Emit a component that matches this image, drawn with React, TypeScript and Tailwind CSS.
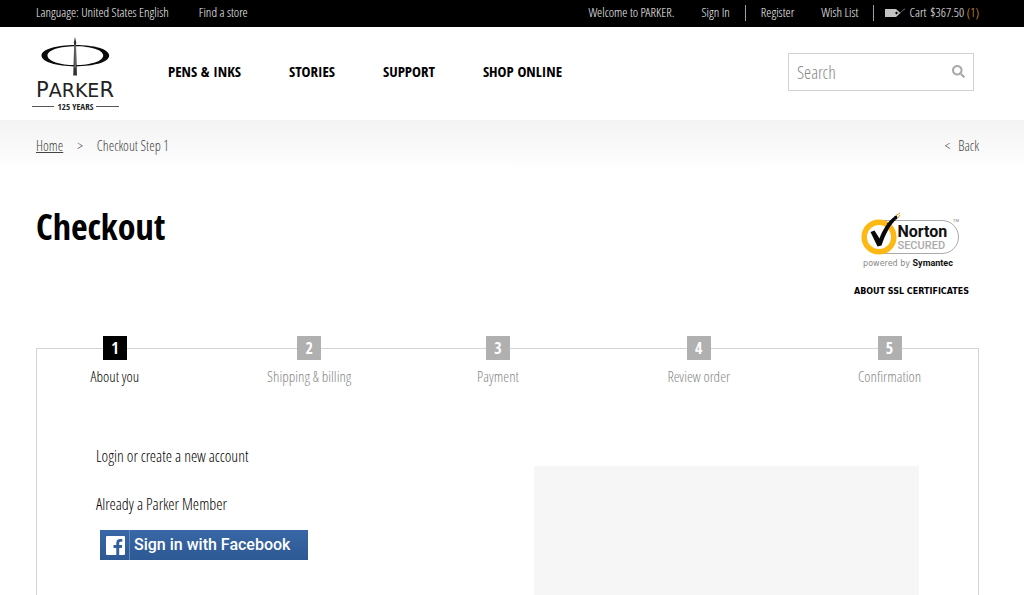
import type { FormEvent } from "react";
import { FaSearch } from "react-icons/fa";

const mainNav = ["PENS & INKS", "STORIES", "SUPPORT", "SHOP ONLINE"];

const steps = [
  "About you",
  "Shipping & billing",
  "Payment",
  "Review order",
  "Confirmation",
];

// Headings, navigation and step numbers share the heavier condensed face
const boldFace = "font-['Open_Sans_Condensed',sans-serif] font-bold";

const ParkerLogo = () => (
  <svg
    viewBox="0 0 88 76"
    className="mt-1 h-[76px] w-[88px] shrink-0"
    role="img"
    aria-label="Parker"
  >
    <path
      fillRule="evenodd"
      fill="#0a0a0a"
      d="M43.300 9C62 9 77.200 13 77.200 19.600S62 30.400 43.300 30.400 9.500 26 9.500 19.600 24.600 9 43.300 9ZM43.300 10.200C28 10.200 15.500 14 15.500 19.600S28 29.200 43.300 29.200 71.200 25.500 71.200 19.600 58.600 10.200 43.300 10.200Z"
    />
    <path fill="#333" d="M43 1L44.300 6.500 44 9 45 39.500H41.200L42.200 9 41.800 6.500Z" />
    <path stroke="#bbb" strokeWidth=".6" d="M43.100 9V32" />
    <text
      x="43"
      y="61"
      textAnchor="middle"
      fill="#222"
      fontFamily="'DejaVu Sans', sans-serif"
      fontSize="19"
    >
      <tspan fontSize="21">P</tspan>ARKE<tspan fontSize="21">R</tspan>
    </text>
    <path stroke="#555" d="M0 70.500H22M64 70.500H87" />
    <text
      x="43.500"
      y="73.500"
      textAnchor="middle"
      fill="#222"
      fontFamily="'Open Sans Condensed', sans-serif"
      fontSize="9"
      fontWeight="700"
    >
      125 YEARS
    </text>
  </svg>
);

const NortonSeal = () => (
  <svg
    viewBox="0 0 104 58"
    className="h-[58px] w-[104px]"
    role="img"
    aria-label="Norton Secured, powered by Symantec"
  >
    <path
      fill="none"
      stroke="#aaa"
      d="M20 8.500H83A16.500 16.500 0 0 1 83 41.500H20"
    />
    <circle cx="20" cy="25" r="14.800" fill="#fff" stroke="#fdb813" strokeWidth="5.500" />
    <path
      fill="#0a0a0a"
      d="M11.500 20L15.500 18.500 20.500 26.500C23.500 18 29 9 37.500 3L38.500 5.500C31 13 26.500 22 22.500 33.500L18.500 34.500Z"
    />
    <path
      stroke="#0a0a0a"
      strokeWidth="3.500"
      strokeDasharray="1.500 1"
      d="M29 13L38 4.500"
    />
    <path stroke="#d89a20" d="M37 3.500L41 1M39 6L41 3" />
    <text
      x="38.500"
      y="24.500"
      fontFamily="Roboto, sans-serif"
      fontSize="16"
      fontWeight="700"
      fill="#111"
    >
      Norton
    </text>
    <text
      x="38.500"
      y="36.500"
      fontFamily="Roboto, sans-serif"
      fontSize="11"
      fontWeight="500"
      fill="#aaa"
    >
      SECURED
    </text>
    <text x="94" y="10" fontFamily="Roboto, sans-serif" fontSize="4" fill="#777">
      TM
    </text>
    <text
      x="49"
      y="54"
      textAnchor="middle"
      fontFamily="'DejaVu Sans', sans-serif"
      fontSize="8"
      fill="#888"
    >
      powered by{" "}
      <tspan fill="#111" fontFamily="Roboto, sans-serif" fontSize="9" fontWeight="700">
        Symantec
      </tspan>
    </text>
  </svg>
);

const CartTag = () => (
  <svg viewBox="0 0 20 10" className="h-2.5 w-5" aria-hidden="true">
    <path fill="#c4c4c4" d="M0 1H11L15.500 5 11 9H0Z" />
    <path fill="#000" d="M11.500 3.500L13 5 11.500 6.500 10 5Z" />
    <path fill="none" stroke="#8a8a8a" strokeWidth=".8" d="M12 5C16 6 17 2 20 1" />
  </svg>
);

const FacebookMark = () => (
  <svg viewBox="0 0 19 19" className="size-[19px]" aria-hidden="true">
    <rect width="19" height="19" rx="1" fill="#fff" />
    <path
      fill="#33609c"
      d="M10.300 19V12H7.500V9H10.300V6.800C10.300 4.200 11.800 2.900 14.200 2.900H16.300V5.700H14.800C13.600 5.700 13.200 6.200 13.200 7.200V9H16.200L15.800 12H13.200V19Z"
    />
  </svg>
);

const Divider = () => <span aria-hidden="true" className="h-4 w-px bg-gray-400" />;

const TopBar = () => (
  <div className="flex h-[27px] items-center justify-between bg-black pr-[45px] pb-0.5 pl-9 text-[13px] text-[#f4f4f4]">
    <div className="flex gap-[30px]">
      <a href="#language">Language: United States English</a>
      <a href="#stores">Find a store</a>
    </div>
    <div className="flex items-center gap-[15px]">
      <span className="mr-3">Welcome to PARKER.</span>
      <a href="#sign-in">Sign In</a>
      <Divider />
      <a href="#register" className="mr-3">
        Register
      </a>
      <a href="#wish-list">Wish List</a>
      <Divider />
      <a href="#cart" className="-ml-1 flex items-center gap-1">
        <CartTag />
        <span>Cart</span>
        <span>
          $367.50 <span className="text-[#e0a850]">(1)</span>
        </span>
      </a>
    </div>
  </div>
);

const Header = () => (
  <header className="flex h-[93px] items-center bg-white pr-[50px] pb-1 pl-8">
    <ParkerLogo />
    <nav className={`ml-12 flex gap-12 text-[15px] text-black ${boldFace}`}>
      {mainNav.map((item) => (
        <a key={item} href="#nav">
          {item}
        </a>
      ))}
    </nav>
    <form
      role="search"
      onSubmit={(e: FormEvent) => e.preventDefault()}
      className="ml-auto flex h-[38px] w-[186px] items-center border border-[#cfd3d2] px-2"
    >
      <input
        type="search"
        aria-label="Search"
        placeholder="Search"
        className="w-full min-w-0 text-lg outline-none placeholder:text-[#888]"
      />
      <button type="submit" aria-label="Submit search" className="text-[#aaa]">
        <FaSearch className="size-[13px]" />
      </button>
    </form>
  </header>
);

const Steps = () => (
  <ol className="-mt-[13px] grid grid-cols-[156fr_233fr_145fr_257fr_125fr] pr-[26px]">
    {steps.map((label, i) => (
      <li
        key={label}
        className={`flex flex-col items-center gap-1.5 whitespace-nowrap ${
          i === 0 ? "text-black" : "text-[#888]"
        }`}
      >
        <span
          className={`flex size-6 items-center justify-center text-base text-white ${boldFace} ${
            i === 0 ? "bg-black" : "bg-[#b0b0b0]"
          }`}
        >
          {i + 1}
        </span>
        <span className="text-[15px] leading-5">{label}</span>
      </li>
    ))}
  </ol>
);

export default function App() {
  return (
    <div className="h-screen overflow-hidden bg-white font-['Open_Sans_Condensed_Light','Open_Sans_Condensed',sans-serif]">
      <TopBar />
      <Header />
      <main className="bg-linear-to-b from-[#f3f3f3] to-white to-[50px] pr-[45px] pl-9">
        <div className="flex items-center justify-between pt-4 text-sm leading-5 text-[#444]">
          <nav aria-label="Breadcrumb" className="flex gap-3.5">
            <a href="#home" className="underline">
              Home
            </a>
            <span>&gt;</span>
            <span>Checkout Step 1</span>
          </nav>
          <a href="#back" className="flex gap-2">
            <span>&lt;</span>
            <span>Back</span>
          </a>
        </div>

        <div className="flex items-start justify-between pt-12">
          <h1 className={`text-4xl leading-[46px] text-black ${boldFace}`}>Checkout</h1>
          <div className="mr-2.5 flex flex-col items-center gap-4 pt-2">
            <NortonSeal />
            <a
              href="#ssl"
              className="font-['DejaVu_Sans',sans-serif] text-[8px] leading-3 font-bold text-black"
            >
              ABOUT SSL CERTIFICATES
            </a>
          </div>
        </div>

        <section className="mt-[50px] border border-b-0 border-[#d4d4d4]">
          <Steps />
          <div className="grid grid-cols-[378fr_385fr] gap-[60px] pr-[59px] pl-[59px]">
            <div className="pt-[58px] text-base leading-6 text-black">
              <h2>Login or create a new account</h2>
              <p className="mt-6">Already a Parker Member</p>
              <button
                type="button"
                className="mt-3.5 ml-1 flex h-[30px] w-[208px] items-center bg-linear-to-b from-[#3968a6] to-[#2d5994] pl-1.5 font-['Roboto',sans-serif] text-base font-medium text-white"
              >
                <FacebookMark />
                <span className="ml-1 flex h-[30px] items-center border-l border-[#6488b8] pl-1">
                  Sign in with Facebook
                </span>
              </button>
            </div>
            <div className="mt-20 h-48 bg-[#f6f6f6]" />
          </div>
        </section>
      </main>
    </div>
  );
}
